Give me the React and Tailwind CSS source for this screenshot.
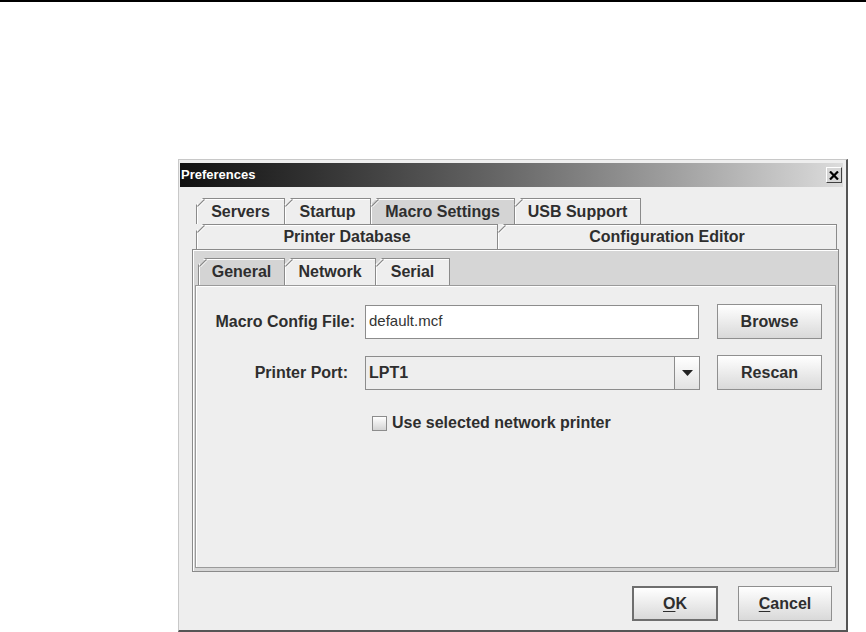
import clsx from 'clsx';

const FONT = "font-['Liberation_Sans',Arial,sans-serif]";

function Tab({ label, selected, className }) {
	return (
		<div
			className={clsx(
				'relative -ml-px flex items-center justify-center border-l border-r border-t border-[#8a8a8a] text-[16px] font-bold text-[#2e2e2e] shadow-[inset_1px_1px_0_#ffffff] [clip-path:polygon(0_7px,7px_0,100%_0,100%_100%,0_100%)]',
				selected ? 'bg-[#d4d4d4]' : 'bg-[#eeeeee]',
				className,
			)}
		>
			<svg className="absolute left-0 top-0 h-[9px] w-[9px]" viewBox="0 0 9 9">
				<line x1="0.5" y1="7.5" x2="7.5" y2="0.5" stroke="#8a8a8a" strokeWidth="1.2" />
				<line x1="1.5" y1="8" x2="8" y2="1.5" stroke="#ffffff" strokeWidth="1" />
			</svg>
			<span className="relative">{label}</span>
		</div>
	);
}

function Button({ children, isDefault, className }) {
	return (
		<button
			type="button"
			className={clsx(
				'flex h-[35px] items-center justify-center bg-gradient-to-b from-[#ffffff] to-[#d9d9d9] text-[16px] font-bold text-[#2e2e2e]',
				isDefault ? 'border-2 border-[#6e6e6e]' : 'border border-[#8f8f8f]',
				className,
			)}
		>
			{children}
		</button>
	);
}

export default function App() {
	return (
		<div className={clsx('min-h-screen bg-white', FONT)}>
			<div className="h-[2px] bg-black" />

			<div className="pl-[178px] pt-[157px]">
				<div className="flex h-[473px] w-[670px] flex-col border-l border-t border-[#c8c8c8] border-b-2 border-r-2 border-b-[#555] border-r-[#555] bg-[#eeeeee] p-[3px] pl-[1px]">
					{/* title bar */}
					<div className="flex h-[24px] items-center justify-between bg-gradient-to-r from-[#111111] via-[#6a6a6a] to-[#dcdcdc] pl-[1px] pr-[1px]">
						<span className="text-[13px] font-bold text-white">Preferences</span>
						<div className="flex h-[16px] w-[16px] items-center justify-center border border-b-[#404040] border-l-white border-r-[#404040] border-t-white bg-[#d6d6d6]">
							<svg width="10" height="9" viewBox="0 0 10 9">
								<path d="M1 0.5 L9 8.5 M9 0.5 L1 8.5" stroke="#000" strokeWidth="2.2" />
							</svg>
						</div>
					</div>

					{/* tabbed pane */}
					<div className="mt-[11px] flex flex-col pl-[12px] pr-[4px]">
						<div className="flex pl-[5px]">
							<Tab label="Servers" className="h-[26px] w-[89px]" />
							<Tab label="Startup" className="h-[26px] w-[87px]" />
							<Tab label="Macro Settings" selected className="h-[26px] w-[145px]" />
							<Tab label="USB Support" className="h-[26px] w-[127px]" />
						</div>
						<div className="flex pl-[5px] pr-[2px]">
							<Tab label="Printer Database" className="h-[25px] w-[302px]" />
							<Tab label="Configuration Editor" className="h-[25px] flex-1" />
						</div>

						<div className="flex h-[323px] flex-col border border-[#8a8a8a] bg-[#d6d6d6] pb-[3px] pl-[2px] pr-[2px] pt-[8px] shadow-[inset_1px_1px_0_#ffffff]">
							<div className="flex pl-[4px]">
								<Tab label="General" selected className="h-[27px] w-[87px]" />
								<Tab label="Network" className="h-[27px] w-[92px]" />
								<Tab label="Serial" className="h-[27px] w-[75px]" />
							</div>
							<div className="flex flex-1 flex-col border border-[#9a9a9a] bg-[#eeeeee] pt-[18px] shadow-[inset_1px_1px_0_#ffffff]">
								<div className="flex items-center">
									<span className="w-[159px] text-right text-[16px] font-bold text-[#2e2e2e]">Macro Config File:</span>
									<div className="ml-[10px] flex h-[34px] w-[334px] items-center border border-[#8c8c8c] bg-white pl-[3px] text-[15px] text-[#333]">
										default.mcf
									</div>
									<Button className="ml-[18px] w-[105px]">Browse</Button>
								</div>

								<div className="mt-[16px] flex items-center">
									<span className="w-[152px] text-right text-[16px] font-bold text-[#2e2e2e]">Printer Port:</span>
									<div className="ml-[17px] flex h-[34px] w-[335px] items-stretch border border-[#8c8c8c] bg-[#eeeeee]">
										<span className="flex flex-1 items-center pl-[3px] text-[16px] font-bold text-[#2e2e2e]">LPT1</span>
										<div className="flex w-[25px] items-center justify-center border-l border-[#8c8c8c] bg-gradient-to-b from-[#ffffff] to-[#e2e2e2]">
											<svg width="11" height="6" viewBox="0 0 11 6">
												<path d="M0 0 H11 L5.5 6 Z" fill="#222" />
											</svg>
										</div>
									</div>
									<Button className="ml-[17px] w-[105px]">Rescan</Button>
								</div>

								<div className="mt-[21px] flex items-center pl-[176px]">
									<div className="h-[15px] w-[15px] border border-[#8c8c8c] bg-gradient-to-b from-[#ffffff] to-[#d4d4d4]" />
									<span className="ml-[5px] text-[16px] font-bold text-[#2e2e2e]">Use selected network printer</span>
								</div>
							</div>
						</div>
					</div>

					{/* buttons */}
					<div className="mt-[14px] flex justify-end gap-[20px] pr-[11px]">
						<Button isDefault className="w-[86px]">
							<span className="underline underline-offset-2">O</span>K
						</Button>
						<Button className="w-[94px]">
							<span className="underline underline-offset-2">C</span>ancel
						</Button>
					</div>
				</div>
			</div>
		</div>
	);
}
